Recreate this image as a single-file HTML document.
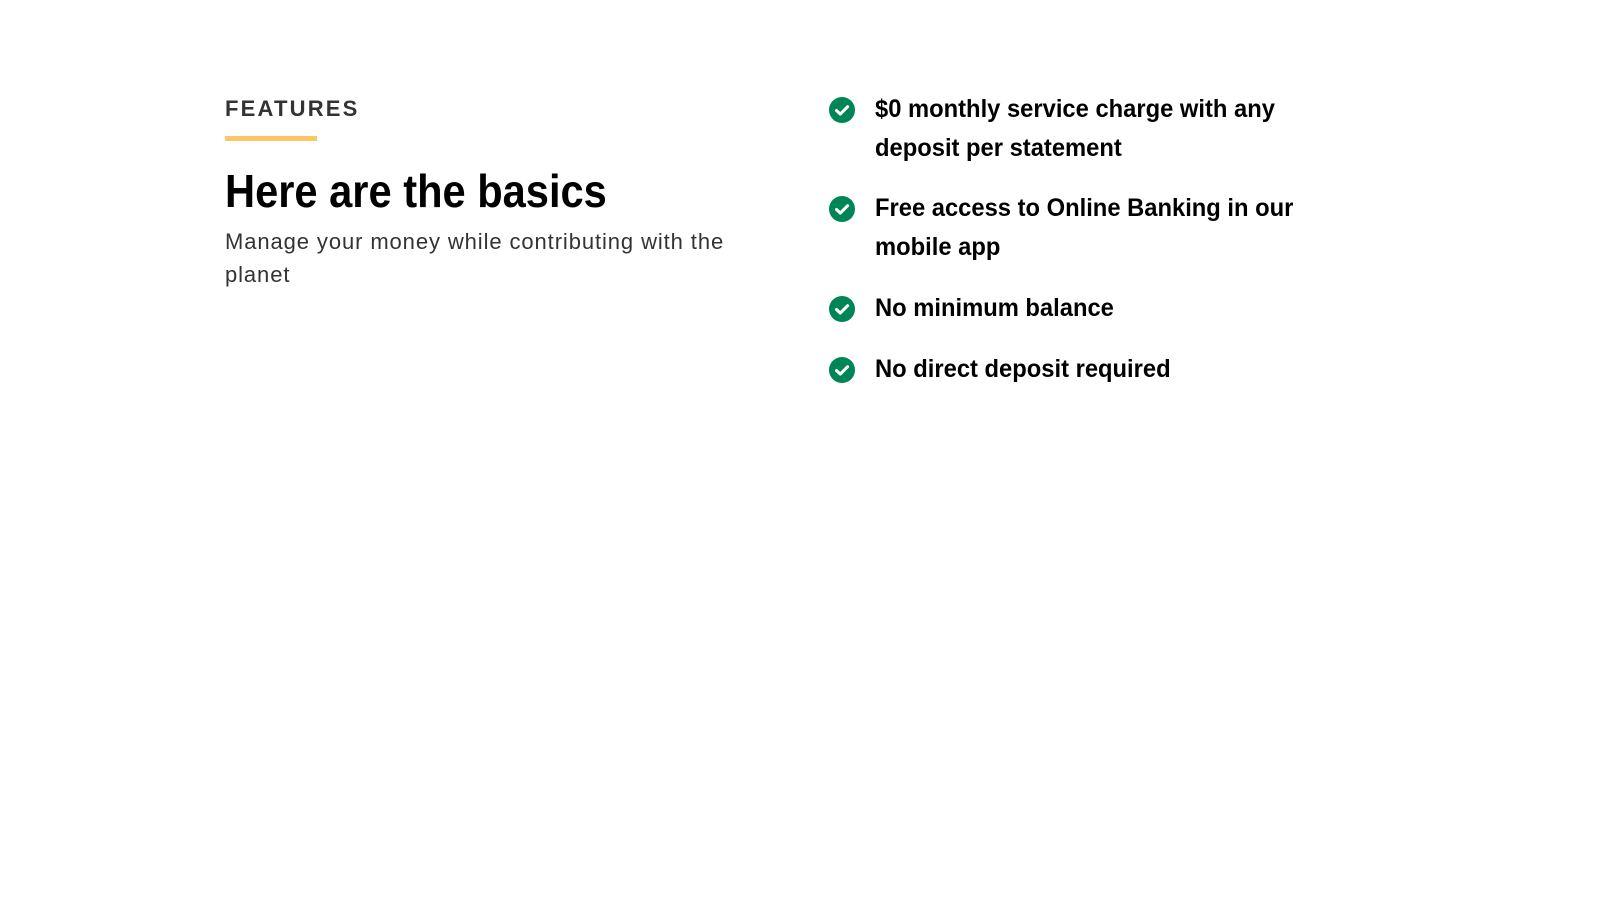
<!DOCTYPE html>
<html><head><meta charset="utf-8"><style>
body{margin:0;width:1600px;height:900px;background:#fff;font-family:"Liberation Sans",sans-serif;position:relative;overflow:hidden}
.a{position:absolute;white-space:nowrap}
.s{display:inline-block;transform-origin:left center}
.feat{left:225px;top:96px;font-size:22px;letter-spacing:2.2px;color:#333;font-weight:600}
.bar{left:225px;top:136px;width:92px;height:5px;background:#fdc566}
.h{left:225px;top:164px;font-size:46px;font-weight:bold;color:#000;line-height:54px}
.sub{left:225px;top:225px;font-size:22px;color:#333;line-height:33px;letter-spacing:0.9px}
.li{font-size:25px;color:#000;line-height:39px;font-weight:bold}
.ic{position:absolute;left:829px;width:26px;height:26px}
</style></head><body>
<div class="a feat">FEATURES</div>
<div class="a bar"></div>
<div class="a h"><span class="s" style="transform:scaleX(0.905)">Here are the basics</span></div>
<div class="a sub">Manage your money while contributing with the<br>planet</div>

<svg class="ic" style="top:97px" viewBox="0 0 26 26"><circle cx="13" cy="13" r="13" fill="#008556"/><path d="M7.5 13.5l3.8 3.6 7.3-7.4" stroke="#fff" stroke-width="3" fill="none" stroke-linecap="round" stroke-linejoin="round"/></svg>
<svg class="ic" style="top:196px" viewBox="0 0 26 26"><circle cx="13" cy="13" r="13" fill="#008556"/><path d="M7.5 13.5l3.8 3.6 7.3-7.4" stroke="#fff" stroke-width="3" fill="none" stroke-linecap="round" stroke-linejoin="round"/></svg>
<svg class="ic" style="top:296px" viewBox="0 0 26 26"><circle cx="13" cy="13" r="13" fill="#008556"/><path d="M7.5 13.5l3.8 3.6 7.3-7.4" stroke="#fff" stroke-width="3" fill="none" stroke-linecap="round" stroke-linejoin="round"/></svg>
<svg class="ic" style="top:357px" viewBox="0 0 26 26"><circle cx="13" cy="13" r="13" fill="#008556"/><path d="M7.5 13.5l3.8 3.6 7.3-7.4" stroke="#fff" stroke-width="3" fill="none" stroke-linecap="round" stroke-linejoin="round"/></svg>

<div class="a li" style="left:875px;top:90px"><span class="s" style="transform:scaleX(0.95)">$0 monthly service charge with any</span><br><span class="s" style="transform:scaleX(0.95)">deposit per statement</span></div>
<div class="a li" style="left:875px;top:189px"><span class="s" style="transform:scaleX(0.95)">Free access to Online Banking in our</span><br><span class="s" style="transform:scaleX(0.95)">mobile app</span></div>
<div class="a li" style="left:875px;top:289px"><span class="s" style="transform:scaleX(0.95)">No minimum balance</span></div>
<div class="a li" style="left:875px;top:350px"><span class="s" style="transform:scaleX(0.95)">No direct deposit required</span></div>
</body></html>
